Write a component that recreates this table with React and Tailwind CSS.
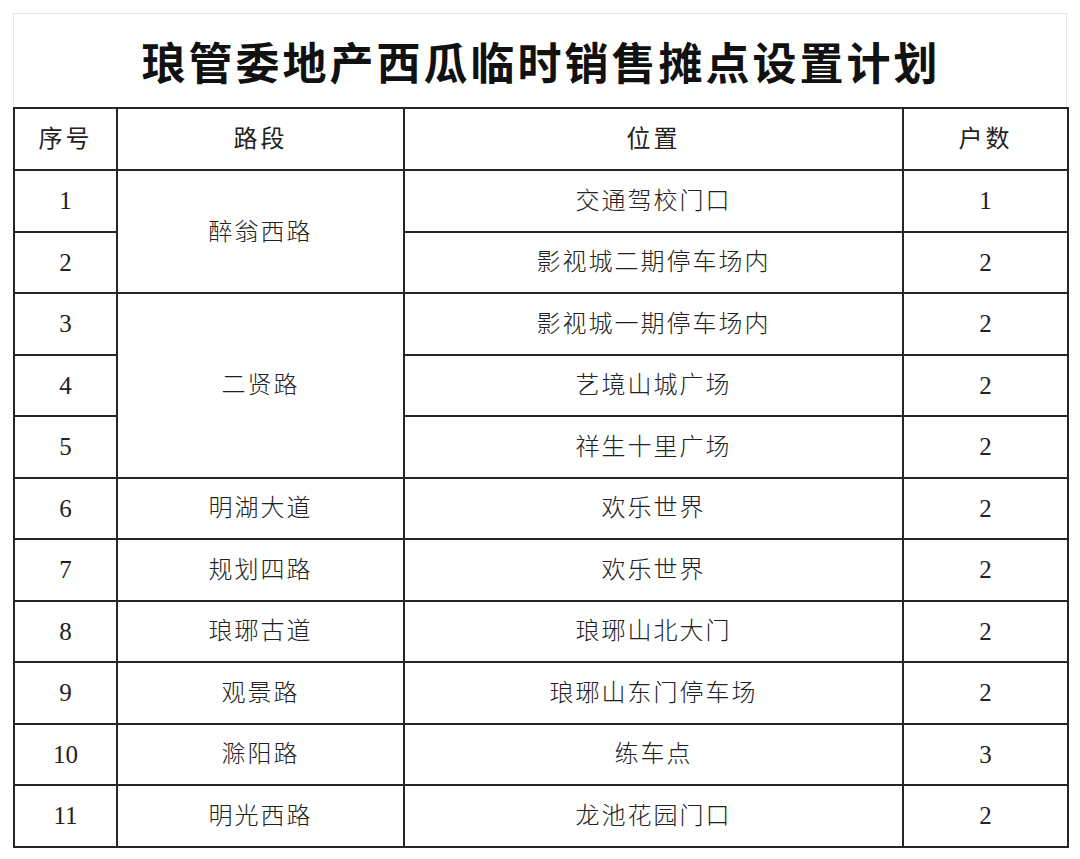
import React from 'react';

const rows = [
  { no: '1', road: '醉翁西路', span: 2, place: '交通驾校门口', count: '1' },
  { no: '2', place: '影视城二期停车场内', count: '2' },
  { no: '3', road: '二贤路', span: 3, place: '影视城一期停车场内', count: '2' },
  { no: '4', place: '艺境山城广场', count: '2' },
  { no: '5', place: '祥生十里广场', count: '2' },
  { no: '6', road: '明湖大道', span: 1, place: '欢乐世界', count: '2' },
  { no: '7', road: '规划四路', span: 1, place: '欢乐世界', count: '2' },
  { no: '8', road: '琅琊古道', span: 1, place: '琅琊山北大门', count: '2' },
  { no: '9', road: '观景路', span: 1, place: '琅琊山东门停车场', count: '2' },
  { no: '10', road: '滁阳路', span: 1, place: '练车点', count: '3' },
  { no: '11', road: '明光西路', span: 1, place: '龙池花园门口', count: '2' },
];

const cell = 'border-2 border-[#262626] text-center align-middle p-0';

const App = () => {
  return (
    <div
      className="w-[1080px] h-[859px] bg-white pt-[13px] pl-[13px]"
      style={{ fontFamily: '"Liberation Serif", "Noto Sans CJK SC", serif' }}
    >
      <div className="w-[1054px] border-t border-x border-[#e6e6e6]">
        <div
          className="h-[93px] flex items-center justify-center text-[44px] font-bold text-[#111] tracking-[3px] pl-[2px]"
          style={{ fontFamily: '"Noto Sans CJK SC", sans-serif' }}
        >
          琅管委地产西瓜临时销售摊点设置计划
        </div>
      </div>
      <table className="table-fixed border-collapse w-[1054px] text-[#222]">
        <colgroup>
          <col className="w-[103px]" />
          <col className="w-[287px]" />
          <col className="w-[499px]" />
          <col className="w-[165px]" />
        </colgroup>
        <thead>
          <tr className="h-[62px] text-[24px] tracking-[3px]">
            <th className={cell + ' font-normal'}>序号</th>
            <th className={cell + ' font-normal'}>路段</th>
            <th className={cell + ' font-normal'}>位置</th>
            <th className={cell + ' font-normal'}>户数</th>
          </tr>
        </thead>
        <tbody>
          {rows.map((r) => (
            <tr key={r.no} className="h-[61.5px] text-[24px] tracking-[2px] font-light">
              <td className={cell + ' tracking-normal text-[25px]'}>{r.no}</td>
              {r.road && (
                <td className={cell} rowSpan={r.span}>
                  {r.road}
                </td>
              )}
              <td className={cell}>{r.place}</td>
              <td className={cell + ' tracking-normal text-[25px]'}>{r.count}</td>
            </tr>
          ))}
        </tbody>
      </table>
    </div>
  );
};

export default App;
